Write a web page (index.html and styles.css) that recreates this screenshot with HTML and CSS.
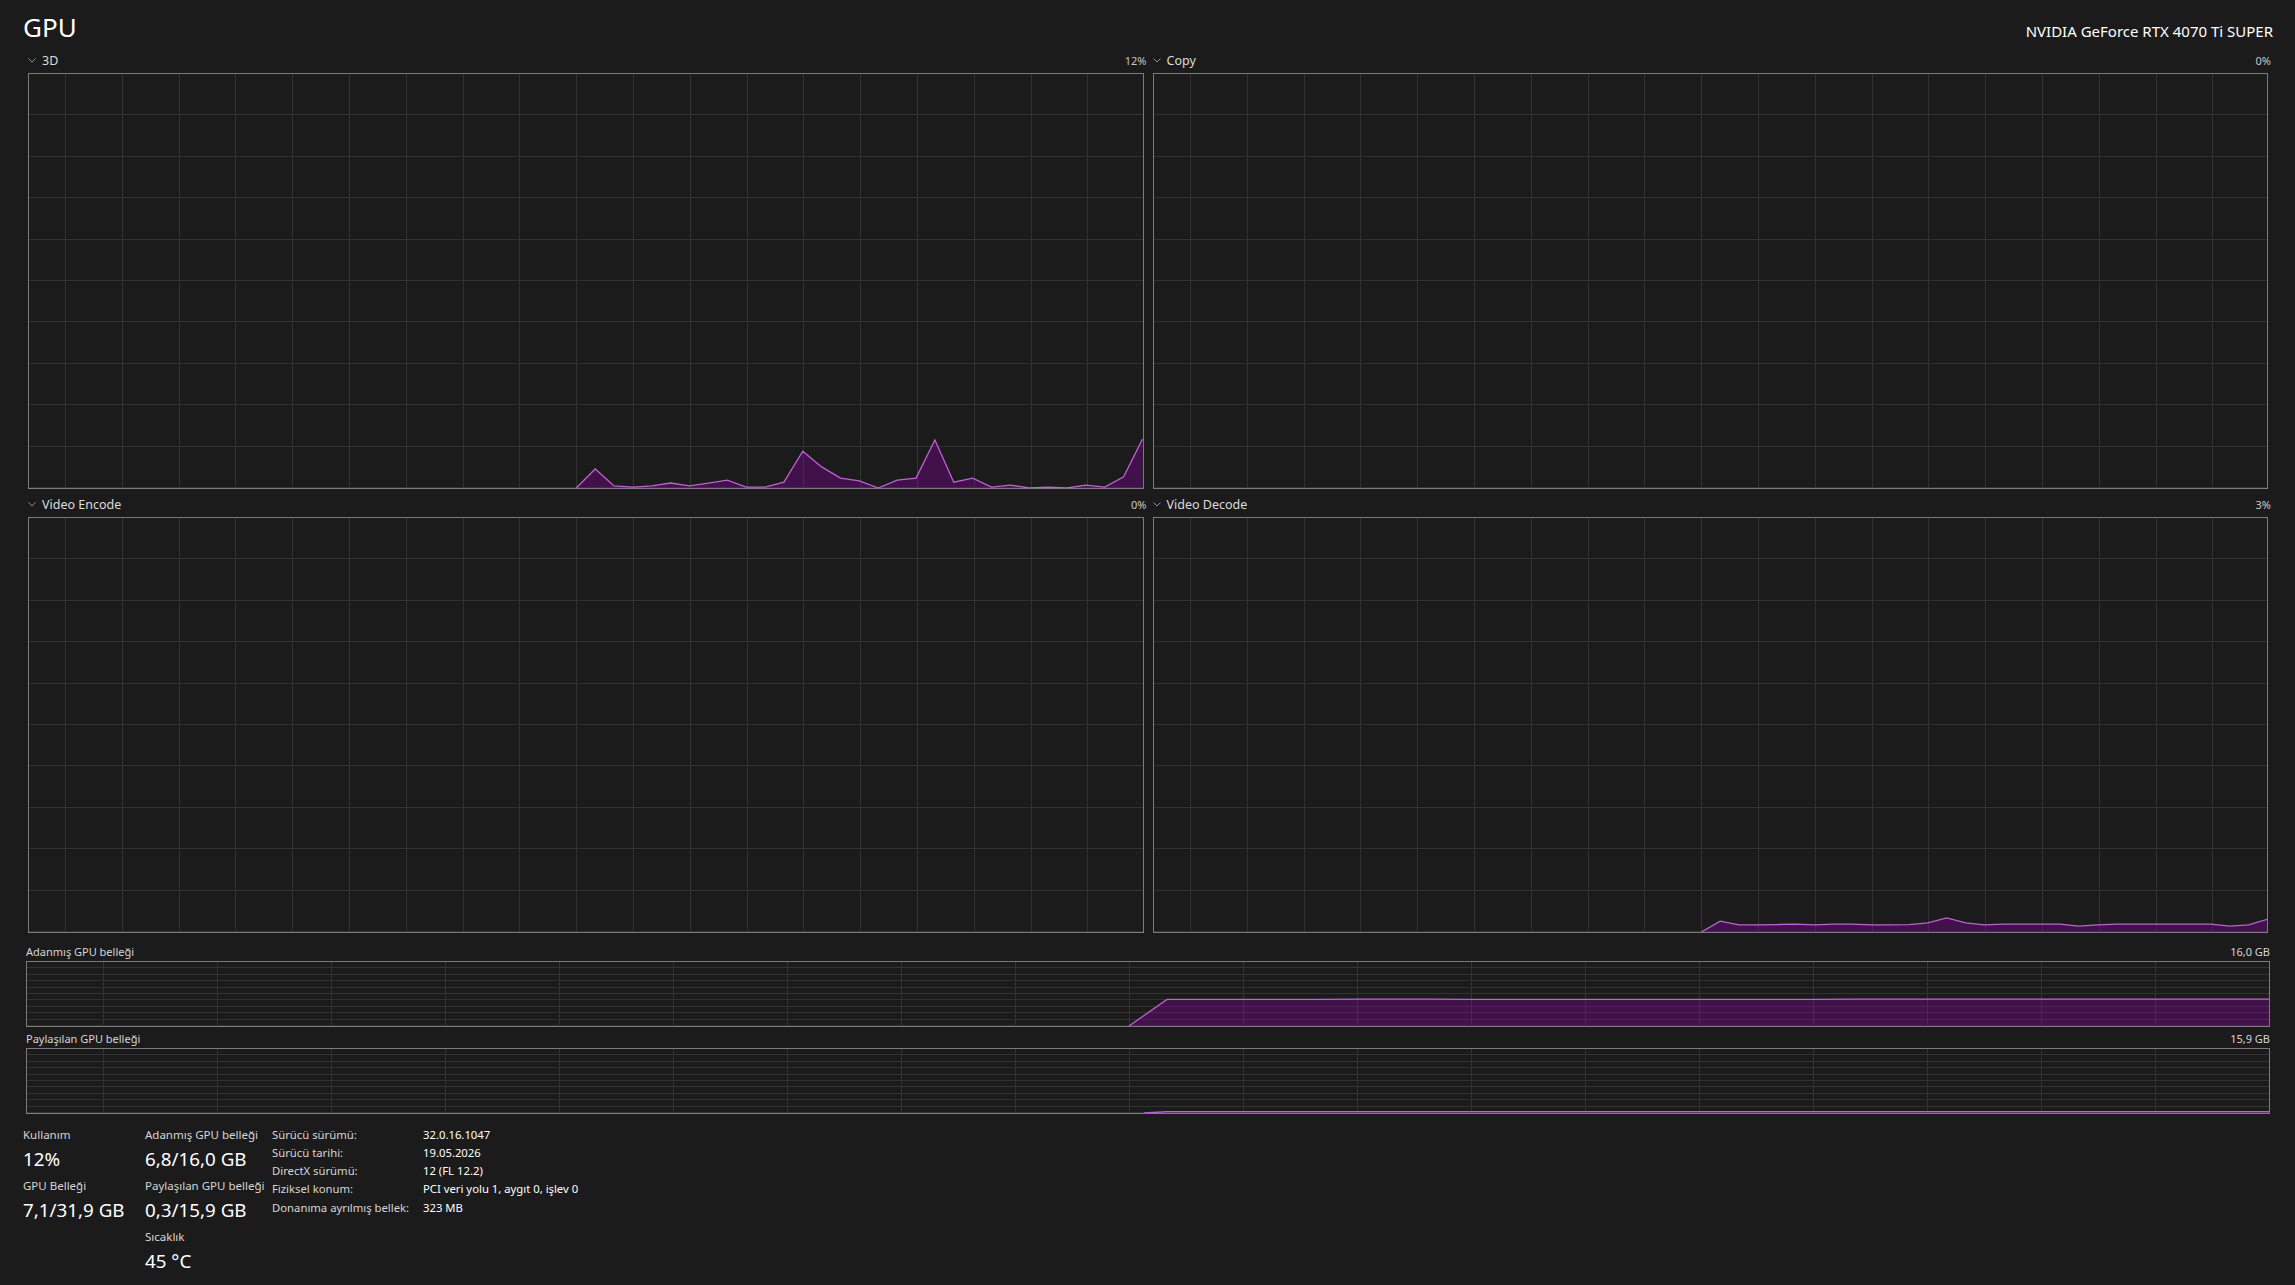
FILE: index.html
```html
<!DOCTYPE html>
<html lang="tr">

<head>
    <meta charset="UTF-8">
    <title>GPU</title>
    <link rel="stylesheet" href="styles.css">
</head>

<body>
    <div class="page">
        <header class="head">
            <h1 class="title">GPU</h1>
            <div class="device">NVIDIA GeForce RTX 4070 Ti SUPER</div>
        </header>

        <!-- engine graphs: 60 samples, x = sample index, y = 100 - value -->
        <div class="engines">
            <section class="engine">
                <div class="engine-head">
                    <span class="engine-name"><svg class="chev" viewBox="0 0 8 5"><polyline points="0.5,0.5 4,4 7.5,0.5" /></svg>3D</span>
                    <span class="engine-pct">12%</span>
                </div>
                <div class="graph graph-engine">
                    <svg viewBox="0 0 59 100" preserveAspectRatio="none">
                        <polygon class="area" points="29,100 30,95.4 31,99.5 32,99.8 33,99.5 34,98.8 35,99.5 36,98.8 37,98.1 38,99.8 39,99.8 40,98.6 41,91.1 42,94.9 43,97.6 44,98.3 45,100 46,98.1 47,97.6 48,88.4 49,98.6 50,97.6 51,99.8 52,99.3 53,100 54,99.8 55,100 56,99.3 57,99.8 58,97.3 59,88.2 59,100" />
                        <polyline class="stroke" points="29,100 30,95.4 31,99.5 32,99.8 33,99.5 34,98.8 35,99.5 36,98.8 37,98.1 38,99.8 39,99.8 40,98.6 41,91.1 42,94.9 43,97.6 44,98.3 45,100 46,98.1 47,97.6 48,88.4 49,98.6 50,97.6 51,99.8 52,99.3 53,100 54,99.8 55,100 56,99.3 57,99.8 58,97.3 59,88.2" />
                    </svg>
                </div>
            </section>
            <section class="engine">
                <div class="engine-head">
                    <span class="engine-name"><svg class="chev" viewBox="0 0 8 5"><polyline points="0.5,0.5 4,4 7.5,0.5" /></svg>Copy</span>
                    <span class="engine-pct">0%</span>
                </div>
                <div class="graph graph-engine"></div>
            </section>
            <section class="engine">
                <div class="engine-head">
                    <span class="engine-name"><svg class="chev" viewBox="0 0 8 5"><polyline points="0.5,0.5 4,4 7.5,0.5" /></svg>Video Encode</span>
                    <span class="engine-pct">0%</span>
                </div>
                <div class="graph graph-engine"></div>
            </section>
            <section class="engine">
                <div class="engine-head">
                    <span class="engine-name"><svg class="chev" viewBox="0 0 8 5"><polyline points="0.5,0.5 4,4 7.5,0.5" /></svg>Video Decode</span>
                    <span class="engine-pct">3%</span>
                </div>
                <div class="graph graph-engine">
                    <svg viewBox="0 0 59 100" preserveAspectRatio="none">
                        <polygon class="area" points="29,100 30,97.4 31,98.3 32,98.3 33,98.2 34,98.1 35,98.3 36,98.1 37,98.1 38,98.3 39,98.3 40,98.2 41,97.8 42,96.6 43,97.8 44,98.3 45,98.1 46,98.1 47,98.1 48,98.1 49,98.6 50,98.3 51,98.1 52,98.1 53,98.1 54,98.1 55,98.1 56,98.1 57,98.6 58,98.3 59,96.9 59,100" />
                        <polyline class="stroke" points="29,100 30,97.4 31,98.3 32,98.3 33,98.2 34,98.1 35,98.3 36,98.1 37,98.1 38,98.3 39,98.3 40,98.2 41,97.8 42,96.6 43,97.8 44,98.3 45,98.1 46,98.1 47,98.1 48,98.1 49,98.6 50,98.3 51,98.1 52,98.1 53,98.1 54,98.1 55,98.1 56,98.1 57,98.6 58,98.3 59,96.9" />
                    </svg>
                </div>
            </section>
        </div>

        <section class="mem mem-first">
            <div class="mem-head">
                <span>Adanmış GPU belleği</span>
                <span>16,0 GB</span>
            </div>
            <div class="graph graph-mem">
                <svg viewBox="0 0 59 100" preserveAspectRatio="none">
                    <polygon class="area" points="29,100 30,58.5 34,58.5 35,58 37,58 38,58.5 47,58.5 48,58 59,58 59,100" />
                    <polyline class="stroke" points="29,100 30,58.5 34,58.5 35,58 37,58 38,58.5 47,58.5 48,58 59,58" />
                </svg>
            </div>
        </section>
        <section class="mem">
            <div class="mem-head">
                <span>Paylaşılan GPU belleği</span>
                <span>15,9 GB</span>
            </div>
            <div class="graph graph-mem">
                <svg viewBox="0 0 59 100" preserveAspectRatio="none">
                    <polygon class="area" points="29.4,100 30,98 59,98 59,100" />
                    <polyline class="stroke" points="29.4,100 30,98 59,98" />
                </svg>
            </div>
        </section>

        <div class="stats">
            <div class="stat-col col-usage">
                <div class="stat">
                    <div class="stat-label">Kullanım</div>
                    <div class="stat-value">12%</div>
                </div>
                <div class="stat">
                    <div class="stat-label">GPU Belleği</div>
                    <div class="stat-value">7,1/31,9 GB</div>
                </div>
            </div>
            <div class="stat-col col-mem">
                <div class="stat">
                    <div class="stat-label">Adanmış GPU belleği</div>
                    <div class="stat-value">6,8/16,0 GB</div>
                </div>
                <div class="stat">
                    <div class="stat-label">Paylaşılan GPU belleği</div>
                    <div class="stat-value">0,3/15,9 GB</div>
                </div>
                <div class="stat">
                    <div class="stat-label">Sıcaklık</div>
                    <div class="stat-value">45 °C</div>
                </div>
            </div>
            <dl class="info">
                <dt>Sürücü sürümü:</dt>
                <dd>32.0.16.1047</dd>
                <dt>Sürücü tarihi:</dt>
                <dd>19.05.2026</dd>
                <dt>DirectX sürümü:</dt>
                <dd>12 (FL 12.2)</dd>
                <dt>Fiziksel konum:</dt>
                <dd>PCI veri yolu 1, aygıt 0, işlev 0</dd>
                <dt>Donanıma ayrılmış bellek:</dt>
                <dd>323 MB</dd>
            </dl>
        </div>
    </div>
</body>

</html>
```

FILE: styles.css
```css
html,
body {
    margin: 0;
    background: #1b1b1b;
}

body {
    font-family: "Noto Sans", "Open Sans", sans-serif;
    color: #fff;
    width: 2295px;
    height: 1285px;
    overflow: hidden;
}

.page {
    padding: 0 23px 0 23px;
}

/* header */
.head {
    display: flex;
    justify-content: space-between;
    align-items: baseline;
    height: 45px;
    padding-top: 10px;
    box-sizing: border-box;
}

.title {
    margin: 0;
    font-size: 26px;
    font-weight: 400;
    line-height: 35px;
}

.device {
    font-size: 15px;
    margin-right: -1px;
}

/* engine graphs */
.engines {
    display: grid;
    grid-template-columns: 1fr 1fr;
    column-gap: 9px;
    margin: 0 4px 0 5px;
}

.engine-head {
    display: flex;
    justify-content: space-between;
    align-items: center;
    height: 28px;
    padding-top: 3px;
    box-sizing: border-box;
    margin-right: -3px;
}

.engine-name {
    display: flex;
    align-items: center;
    font-size: 12.5px;
    color: #dcdcdc;
}

.chev {
    width: 8px;
    height: 5px;
    margin: 0 6px 0 0;
    fill: none;
    stroke: #8f8f8f;
    stroke-width: 1;
}

.engine-pct {
    font-size: 11px;
    color: #c8c8c8;
}

.graph {
    border: 1px solid #7b7b7b;
    background-color: #1b1b1b;
}

.graph svg {
    display: block;
    width: 100%;
    height: 100%;
}

.graph .area {
    fill: rgba(157, 0, 184, .3);
}

.graph .stroke {
    fill: none;
    stroke: #c75ae0;
    stroke-width: 1.3px;
    vector-effect: non-scaling-stroke;
}

.graph-engine {
    height: 414px;
    background-image:
        repeating-linear-gradient(to right, transparent 0 36px, #333 36px 37px, transparent 37px 56.8px),
        repeating-linear-gradient(to bottom, transparent 0 calc(10% - 1px), #333 calc(10% - 1px) 10%);
}

/* memory graphs */
.mem {
    margin: 0 2px 0 3px;
}

.mem-first {
    margin-top: 7px;
}

.mem-head {
    display: flex;
    justify-content: space-between;
    padding-top: 3px;
    line-height: 18px;
    font-size: 11px;
    color: #d6d6d6;
}

.graph-mem {
    height: 64px;
    background-image:
        repeating-linear-gradient(to right, transparent 0 76px, #333 76px 77px, transparent 77px 114px),
        repeating-linear-gradient(to bottom, transparent 0 calc(10% - 1px), #333 calc(10% - 1px) 10%);
}

/* bottom stats */
.stats {
    display: flex;
    margin-top: 12px;
}

.stat-col {
    display: flex;
    flex-direction: column;
    gap: 3px;
}

.col-usage {
    width: 122px;
}

.col-mem {
    width: 127px;
}

.stat-label {
    font-size: 11.5px;
    line-height: 18px;
    color: #d6d6d6;
}

.stat-value {
    font-size: 18.8px;
    line-height: 30px;
}

.info {
    display: grid;
    grid-template-columns: 151px auto;
    grid-auto-rows: 18.25px;
    align-items: center;
    margin: -1px 0 0;
    font-size: 11.3px;
}

.info dt {
    color: #d6d6d6;
}

.info dd {
    margin: 0;
    color: #fff;
}
```
